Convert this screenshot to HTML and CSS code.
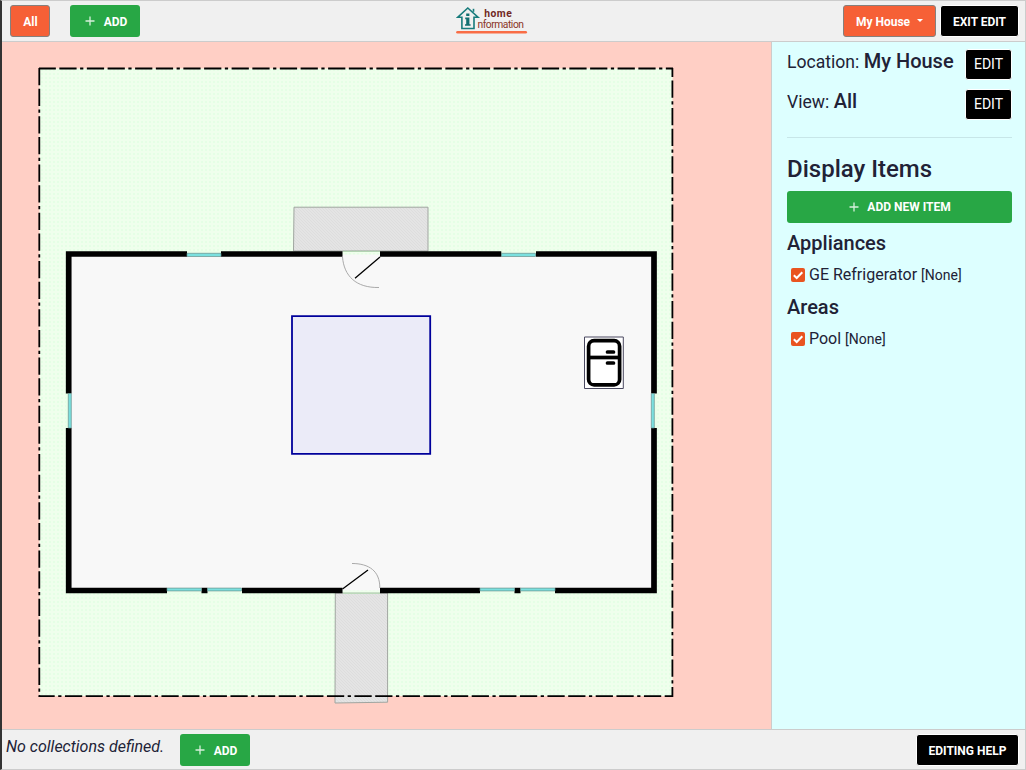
FILE: index.html
```html
<!DOCTYPE html>
<html lang="en">
<head>
<meta charset="utf-8">
<title>Home Information</title>
<link rel="stylesheet" href="styles.css">
</head>
<body>
<div class="app">
  <header class="topbar">
    <button class="btn orange all">All</button>
    <button class="btn green add"><svg class="plus" viewBox="0 0 10 10"><path d="M5 0.5V9.5M0.5 5H9.5"/></svg>ADD</button>
    <div class="brand">
      <svg width="72" height="30" viewBox="0 0 72 30">
        <path class="house" d="M5.9 12.2V23.5H18V12.2H22L11.8 3L1.8 12.2Z"/>
        <path class="chimney" d="M17.5 6.8V3.8"/>
        <path class="info" d="M10.2 8.5H13.4V11H10.2ZM9.2 12.6H13.4V19.2H14.6V20.8H9V19.2H10.2V14.2H9.2Z"/>
        <text class="name strong" x="28.3" y="12" textLength="27.5">home</text>
        <text class="name" x="21.5" y="23.2" textLength="46.5">nformation</text>
        <path class="underline" d="M1.5 27.3H69.7"/>
      </svg>
    </div>
    <button class="btn orange house-menu">My House<span class="caret"></span></button>
    <button class="btn black exit">EXIT EDIT</button>
  </header>
  <main class="content">
    <section class="canvas">
      <svg class="plan" width="769" height="687" viewBox="2 42 769 687">
        <defs>
          <pattern id="grass" width="4" height="4" patternUnits="userSpaceOnUse"><path class="grass-base" d="M0 0H4V4H0Z"/><path class="grass-dot" d="M1 1h2v2h-2z"/></pattern>
          <pattern id="paving" width="3" height="3" patternUnits="userSpaceOnUse"><path class="pave-base" d="M0 0H3V3H0Z"/><path class="pave-line" d="M-1 -1L4 4M-1 2L1 4M2 -1L4 1"/></pattern>
        </defs>
        <path fill="url(#grass)" d="M39.5 68.5H672.5V696H39.5Z"/>
        <path class="paving" fill="url(#paving)" d="M294 207.2H428V251H293.5Z"/>
        <path class="paving" fill="url(#paving)" d="M335.3 593H387.6V702.2L335 703Z"/>
        <path class="floor" d="M69 254.5H654V590.5H69Z"/>
        <path class="boundary top-edge" d="M39 68.5H673"/>
        <path class="boundary right-edge" d="M672.4 68V697"/>
        <path class="boundary bottom-edge" d="M39 696.2H673"/>
        <path class="boundary left-edge" d="M39.3 68V697"/>
        <path class="wall" d="M187 254H68.7V393.5M221 254H342.5M380 254H501.5M536 254H654V393.5M654 428V590.5H555M520.5 590.5H514.5M480 590.5H380M342.5 590.5H242M207.5 590.5H201.5M167 590.5H68.7V428"/>
        <path class="trim" d="M187 251H221V252.8H187ZM501.5 251H536V252.8H501.5ZM343 251H380V252H343ZM167 591.8H201V594H167ZM208 591.8H242V594H208ZM480 591.8H514V594H480ZM521 591.8H555V594H521ZM343 592.4H380V594H343ZM66 394H67.8V428H66ZM655 394H657V428H655Z"/>
        <g class="window">
          <path d="M187 253.3h34v3.2h-34zM501.5 253.3h34v3.2h-34zM167 588.1h34.5v2.8h-34.5zM207.5 588.1h34v2.8h-34zM480 588.1h34.5v2.8h-34.5zM520.5 588.1h34.5v2.8h-34.5zM68.3 393.5h3v34.5h-3zM651.3 393.5h3v34.5h-3z"/>
        </g>
        <path class="sill" d="M343 251.3H380M343 593.2H380"/>
        <path class="swing" d="M342.5 257C344 276 356 288 379 287.5M352 563.5C369 563.5 380 571 379.8 588"/>
        <path class="door" d="M380 257L355 278.3M342.5 589L368 570"/>
        <path class="pool" d="M292 316.2H430.2V453.8H292Z"/>
        <path class="fridge-box" d="M584.5 337H623.3V388.5H584.5Z"/>
        <rect class="fridge" x="588.6" y="340.7" width="31" height="44.2" rx="5.5"/>
        <path class="shelf" d="M588 357.5H620"/>
        <path class="handle" d="M607.5 352H613.5M607.5 363H613.5"/>
      </svg>
    </section>
    <aside class="sidebar">
      <div class="row"><p>Location: <strong>My House</strong></p><button class="btn black edit">EDIT</button></div>
      <div class="row"><p>View: <strong>All</strong></p><button class="btn black edit">EDIT</button></div>
      <div class="divider"></div>
      <h2>Display Items</h2>
      <button class="btn green new-item"><svg class="plus" viewBox="0 0 10 10"><path d="M5 0.5V9.5M0.5 5H9.5"/></svg>ADD NEW ITEM</button>
      <h3>Appliances</h3>
      <div class="item"><svg class="check" viewBox="0 0 14 14"><rect width="14" height="14" rx="2"/><path d="M2.8 7.2L5.7 10L11.3 4.2"/></svg><span>GE Refrigerator <small>[None]</small></span></div>
      <h3>Areas</h3>
      <div class="item"><svg class="check" viewBox="0 0 14 14"><rect width="14" height="14" rx="2"/><path d="M2.8 7.2L5.7 10L11.3 4.2"/></svg><span>Pool <small>[None]</small></span></div>
    </aside>
  </main>
  <footer class="bottombar">
    <em>No collections defined.</em>
    <button class="btn green add"><svg class="plus" viewBox="0 0 10 10"><path d="M5 0.5V9.5M0.5 5H9.5"/></svg>ADD</button>
    <button class="btn black help">EDITING HELP</button>
  </footer>
</div>
</body>
</html>
```
FILE: styles.css
```css
* { box-sizing: border-box; }
body { margin: 0; background: #f0f0f0; color: #212236; font-family: Roboto, sans-serif; font-size: 16px; line-height: 24px; }
.app { width: 1026px; height: 770px; display: flex; flex-direction: column; overflow: hidden; border: 1px solid #ccc; border-left: 2px solid #333; }
.topbar { height: 41px; flex: none; display: flex; align-items: flex-start; padding: 4px 6px 0 8px; border-bottom: 1px solid #ccc; }
.btn { display: flex; align-items: center; justify-content: center; height: 32px; flex: none; padding: 1px 0 0; border: 0; border-radius: 3px; font: 700 12px/18px Roboto, sans-serif; color: #fff; white-space: nowrap; }
.orange { background: #f66036; border: 1px solid #85807d; }
.green { background: #28a745; }
.black { background: #000; border: 1px solid #fff; }
.all { width: 40px; padding-left: 1px; }
.add { width: 70px; margin-left: 20px; padding-left: 2px; }
.plus { width: 10px; height: 10px; margin: -1px 8px 0 0; overflow: visible; }
.add .plus { margin-right: 9px; }
.plus path { stroke: #d7f0dc; stroke-width: 1.3; fill: none; }
.brand { width: 72px; height: 30px; margin-left: 316px; }
.brand svg { display: block; }
.house, .chimney { fill: none; stroke: #177b7b; stroke-width: 1.6; }
.info { fill: #126f70; }
.name { font: 10.3px Roboto, sans-serif; fill: #8b3527; }
.strong { font-weight: 700; fill: #71281f; }
.underline { stroke: #f96d45; stroke-width: 2.6; stroke-linecap: round; }
.house-menu { width: 93px; margin-left: auto; }
.caret { border: 3px solid transparent; border-top-color: #fff; border-bottom: 0; margin: -2px 0 0 7px; }
.exit { width: 79px; margin-left: 4px; }
.content { height: 687px; flex: none; display: flex; }
.canvas { width: 769px; flex: none; background: #ffcfc5; }
.plan { display: block; }
.sidebar { flex: 1; background: #dff; border-left: 1px solid #ccc; padding: 7px 13px 0 15px; }
.row { display: flex; justify-content: space-between; height: 40px; align-items: flex-start; }
.row p { margin: 0; white-space: nowrap; font-size: 17.6px; }
.row strong { font-size: 20px; font-weight: 500; }
.edit { width: 47px; height: 31px; padding: 0 0 1px; font-size: 14px; font-weight: 400; }
.divider { height: 1px; background: #c7e6e8; margin: 8px 0 16px; }
h2 { margin: 0; font-size: 24px; line-height: 29px; font-weight: 500; height: 37px; padding-top: 1px; }
.new-item { width: 100%; padding-left: 1px; padding-top: 0; }
.new-item .plus { margin-top: -1px; }
h3 { margin: 8px 0 0; font-size: 20px; line-height: 24px; font-weight: 500; }
.item { display: flex; align-items: center; height: 32px; padding: 8px 0 0 4px; gap: 4px; white-space: nowrap; }
.item small { font-size: 14px; }
.check { width: 14px; height: 14px; }
.check rect { fill: #e95420; }
.check path { fill: none; stroke: #fff; stroke-width: 2; }
.bottombar { height: 40px; flex: none; display: flex; padding: 4px 6px 0 4px; border-top: 1px solid #ccc; }
.bottombar em { width: 154px; padding-top: 1px; white-space: nowrap; }
.help { width: 103px; margin-left: auto; }
.grass-base { fill: #efffec; }
.grass-dot { fill: #e5ffe5; }
.pave-base { fill: #e4e4e4; }
.pave-line { stroke: #dadada; stroke-width: .7; }
.paving { stroke: #a0a5a0; stroke-width: 1; }
.floor { fill: #f8f8f8; }
.boundary { fill: none; stroke: #000; stroke-width: 1.8; stroke-dasharray: 17.25 3.5 17.25 3.5 3.25 3.5; }
.top-edge { stroke-dashoffset: .4; }
.right-edge { stroke-dashoffset: 8.2; }
.bottom-edge { stroke-dashoffset: 22.3; }
.left-edge { stroke-dashoffset: 0; }
.wall { fill: none; stroke: #000; stroke-width: 5.7; }
.trim { fill: #eaffe9; }
.window { fill: #7be0df; stroke: #68908d; stroke-width: .7; }
.sill { stroke: #a6c8a5; stroke-width: 1; }
.swing { fill: none; stroke: #aaa; stroke-width: 1; }
.door { stroke: #000; stroke-width: 1.3; }
.pool { fill: #ebebf8; stroke: #00009b; stroke-width: 1.8; }
.fridge-box { fill: #fff; stroke: #4a4960; stroke-width: 1; }
.fridge, .shelf, .handle { fill: none; stroke: #000; stroke-width: 3.7; }
.handle { stroke-linecap: round; }
```
